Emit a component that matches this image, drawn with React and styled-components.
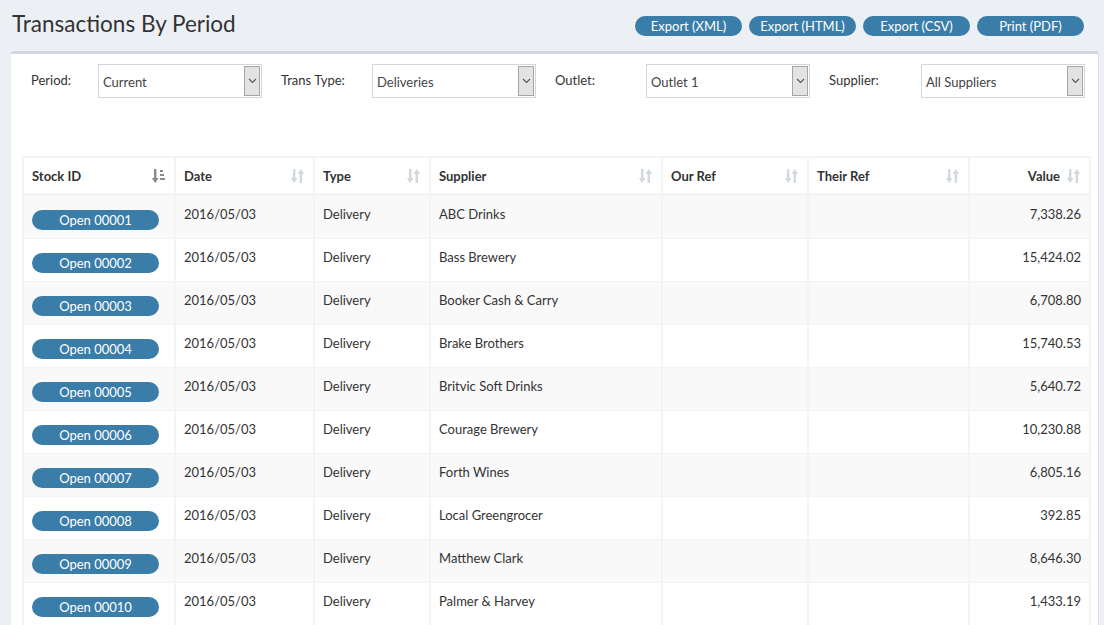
import React from "react";
import styled, { createGlobalStyle } from "styled-components";

const GlobalStyle = createGlobalStyle`
  body {
    margin: 0;
    background: #ecf0f5;
    font-family: Lato, "Liberation Sans", sans-serif;
    color: #333;
  }
`;

const rows = [
  ["00001", "ABC Drinks", "7,338.26"],
  ["00002", "Bass Brewery", "15,424.02"],
  ["00003", "Booker Cash & Carry", "6,708.80"],
  ["00004", "Brake Brothers", "15,740.53"],
  ["00005", "Britvic Soft Drinks", "5,640.72"],
  ["00006", "Courage Brewery", "10,230.88"],
  ["00007", "Forth Wines", "6,805.16"],
  ["00008", "Local Greengrocer", "392.85"],
  ["00009", "Matthew Clark", "8,646.30"],
  ["00010", "Palmer & Harvey", "1,433.19"],
];

const filters = [
  { label: "Period:", value: "Current", labelWidth: 67 },
  { label: "Trans Type:", value: "Deliveries", labelWidth: 91 },
  { label: "Outlet:", value: "Outlet 1", labelWidth: 91 },
  { label: "Supplier:", value: "All Suppliers", labelWidth: 92 },
];

const columns = [
  { title: "Stock ID", width: 152, sorted: true },
  { title: "Date", width: 139 },
  { title: "Type", width: 116 },
  { title: "Supplier", width: 232 },
  { title: "Our Ref", width: 146 },
  { title: "Their Ref", width: 161 },
  { title: "Value", width: 121, right: true },
];

const SortIcon = ({ sorted }) =>
  sorted ? (
    <svg width="15" height="16" viewBox="0 0 15 16">
      <g fill="#8a8a8a">
        <rect x="3" y="1" width="2.4" height="10" />
        <path d="M0.8 10 L7.6 10 L4.2 15 Z" />
        <rect x="9" y="2" width="3" height="2" />
        <rect x="9" y="6" width="4" height="2" />
        <rect x="9" y="10" width="5" height="2" />
      </g>
    </svg>
  ) : (
    <svg width="15" height="16" viewBox="0 0 15 16">
      <g fill="#d3d7de">
        <rect x="3" y="1" width="2.4" height="10" />
        <path d="M0.8 10 L7.6 10 L4.2 15 Z" />
        <rect x="9.6" y="5" width="2.4" height="10" />
        <path d="M7.4 6 L14.2 6 L10.8 1 Z" />
      </g>
    </svg>
  );

const Chevron = () => (
  <svg width="9" height="6" viewBox="0 0 9 6">
    <path d="M1 1 L4.5 4.5 L8 1" fill="none" stroke="#555" strokeWidth="1.1" />
  </svg>
);

const App = () => (
  <>
    <GlobalStyle />
    <Page>
      <Header>
        <Title>Transactions By Period</Title>
        <Actions>
          <PillButton>Export (XML)</PillButton>
          <PillButton>Export (HTML)</PillButton>
          <PillButton>Export (CSV)</PillButton>
          <PillButton>Print (PDF)</PillButton>
        </Actions>
      </Header>
      <Panel>
        <Filters>
          {filters.map((f) => (
            <FilterGroup key={f.label}>
              <FilterLabel width={f.labelWidth}>{f.label}</FilterLabel>
              <SelectBox>
                <SelectValue>{f.value}</SelectValue>
                <SelectArrow>
                  <Chevron />
                </SelectArrow>
              </SelectBox>
            </FilterGroup>
          ))}
        </Filters>
        <Table>
          <colgroup>
            {columns.map((c) => (
              <col key={c.title} style={{ width: c.width }} />
            ))}
          </colgroup>
          <thead>
            <tr>
              {columns.map((c) => (
                <HeadCell key={c.title}>
                  <HeadInner right={c.right}>
                    <span>{c.title}</span>
                    <SortIcon sorted={c.sorted} />
                  </HeadInner>
                </HeadCell>
              ))}
            </tr>
          </thead>
          <tbody>
            {rows.map(([id, supplier, value], i) => (
              <Row key={id} striped={i % 2 === 0}>
                <Cell>
                  <OpenButton>Open {id}</OpenButton>
                </Cell>
                <Cell>2016/05/03</Cell>
                <Cell>Delivery</Cell>
                <Cell>{supplier}</Cell>
                <Cell />
                <Cell />
                <Cell right>{value}</Cell>
              </Row>
            ))}
          </tbody>
        </Table>
      </Panel>
    </Page>
  </>
);

const Page = styled.div`
  padding: 0 5px 0 11px;
  height: 625px;
  overflow: hidden;
`;

const Header = styled.div`
  display: flex;
  justify-content: space-between;
  align-items: flex-start;
  padding-right: 15px;
  height: 51px;
`;

const Title = styled.h1`
  margin: 9px 0 0 1px;
  font-size: 22.5px;
  font-weight: 400;
  color: #333;
  line-height: 30px;
`;

const Actions = styled.div`
  display: flex;
  gap: 7px;
  margin-top: 16px;
`;

const PillButton = styled.button`
  height: 20px;
  width: 107px;
  padding: 0;
  border: none;
  border-radius: 10px;
  background: #3a7da9;
  color: #fff;
  font-family: inherit;
  font-size: 13px;
  line-height: 20px;
`;

const Panel = styled.div`
  background: #fff;
  border-top: 3px solid #d2d6de;
  border-right: 1px solid #dde1e7;
  border-radius: 3px;
  padding: 10px 10px 0 11px;
`;

const Filters = styled.div`
  display: flex;
  gap: 19px;
  padding-left: 9px;
  margin-bottom: 58px;
`;

const FilterGroup = styled.div`
  display: flex;
  align-items: flex-start;
`;

const FilterLabel = styled.label`
  width: ${(p) => p.width}px;
  padding-top: 8px;
  font-size: 13px;
  color: #333;
`;

const SelectBox = styled.div`
  width: 164px;
  height: 34px;
  box-sizing: border-box;
  border: 1px solid #d2d6de;
  display: flex;
  align-items: center;
  justify-content: space-between;
  padding: 2px 1px 2px 4px;
`;

const SelectValue = styled.span`
  font-size: 13px;
  color: #444;
  padding-top: 1px;
`;

const SelectArrow = styled.span`
  width: 16px;
  height: 30px;
  box-sizing: border-box;
  border: 1px solid #a9a4a4;
  background: #e3e3e3;
  display: flex;
  align-items: center;
  justify-content: center;
`;

const Table = styled.table`
  width: 1067px;
  table-layout: fixed;
  border-collapse: collapse;
  border: 2px solid #f4f4f4;
  font-size: 13px;
`;

const HeadCell = styled.th`
  height: 35px;
  padding: 0 8px;
  border: 2px solid #f4f4f4;
  border-bottom-width: 3px;
  text-align: left;
  font-weight: 700;
  font-size: 13px;
  color: #333;
`;

const HeadInner = styled.div`
  display: flex;
  align-items: center;
  justify-content: ${(p) => (p.right ? "flex-end" : "space-between")};
  gap: 6px;
`;

const Row = styled.tr`
  background: ${(p) => (p.striped ? "#f9f9f9" : "#fff")};
`;

const Cell = styled.td`
  height: 26px;
  padding: 8px 8px 8px 8px;
  border-style: solid;
  border-color: #f4f4f4;
  border-width: 1px 2px;
  vertical-align: top;
  line-height: 20px;
  color: #333;
  text-align: ${(p) => (p.right ? "right" : "left")};
`;

const OpenButton = styled.button`
  display: block;
  width: 127px;
  height: 20px;
  margin-top: 6px;
  border: none;
  border-radius: 10px;
  background: #3a7da9;
  color: #fff;
  font-family: inherit;
  font-size: 13px;
  line-height: 20px;
  padding: 0;
`;

export default App;
